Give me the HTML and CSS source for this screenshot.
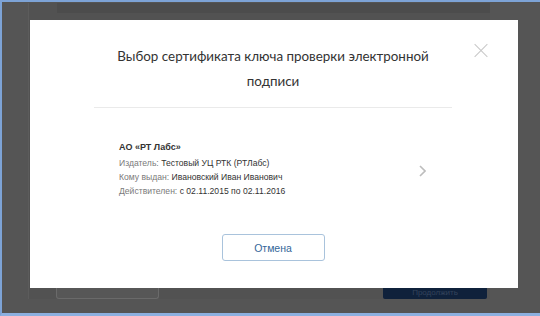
FILE: index.html
```html
<!DOCTYPE html>
<html lang="ru">
<head>
    <meta charset="UTF-8">
    <title>Выбор сертификата</title>
    <link rel="stylesheet" href="styles.css">
</head>
<body>
    <div class="screen">
        <!-- page behind the overlay -->
        <div class="page">
            <div class="page-header"></div>
            <div class="page-spacer"></div>
            <div class="page-actions">
                <div class="btn-back"></div>
                <div class="btn-next">Продолжить</div>
            </div>
        </div>

        <!-- modal dialog -->
        <div class="modal">
            <span class="modal-close"></span>
            <h2 class="modal-title">Выбор сертификата ключа проверки электронной подписи</h2>
            <div class="modal-divider"></div>

            <div class="cert">
                <div class="cert-info">
                    <div class="cert-name">АО «РТ Лабс»</div>
                    <div class="cert-row"><span class="cert-label">Издатель:</span> Тестовый УЦ РТК (РТЛабс)</div>
                    <div class="cert-row"><span class="cert-label">Кому выдан:</span> Ивановский Иван Иванович</div>
                    <div class="cert-row"><span class="cert-label">Действителен:</span> с 02.11.2015 по 02.11.2016</div>
                </div>
                <svg class="cert-arrow" width="7" height="12" viewBox="0 0 7 12">
                    <polyline points="1,1 6,6 1,11" fill="none" stroke="#bdbdbd" stroke-width="1.6"/>
                </svg>
            </div>

            <div class="modal-footer">
                <button class="btn-cancel">Отмена</button>
            </div>
        </div>
    </div>
</body>
</html>
```

FILE: styles.css
```css
/* Basic reset */
* {
    margin: 0;
    padding: 0;
    box-sizing: border-box;
}

body {
    width: 540px;
    height: 316px;
    overflow: hidden;
    font-family: 'Liberation Sans', Arial, sans-serif;
}

/* Outer frame with blue edge */
.screen {
    position: relative;
    width: 540px;
    height: 316px;
    background-color: #555;
    border-top: 2px solid #7da3d6;
    border-left: 2px solid #7da3d6;
    border-bottom: 3px solid #8cb0e0;
    padding: 1px 50px 14px 26px;
}

/* Dimmed page under the overlay */
.page {
    height: 100%;
    display: flex;
    flex-direction: column;
    background-color: #525252;
    border-left: 1px solid #5c5c5c;
}

.page-header {
    height: 10px;
    margin: 0 0 0 28px;
    background-color: #4c4c4c;
}

.page-spacer {
    flex: 1;
}

.page-actions {
    display: flex;
    justify-content: space-between;
    padding: 0 0 0 27px;
}

.btn-back {
    width: 103px;
    height: 11px;
    border: 1px solid #6a6a6a;
    border-top: none;
    border-radius: 0 0 3px 3px;
    background-color: #575757;
}

.btn-next {
    width: 104px;
    height: 11px;
    border-radius: 0 0 2px 2px;
    background-color: #0f213b;
    color: #34445c;
    font-size: 8px;
    line-height: 10px;
    text-align: center;
    margin-right: 3px;
}

/* Modal */
.modal {
    position: absolute;
    left: 28px;
    top: 18px;
    width: 488px;
    height: 268px;
    background-color: #fff;
    padding: 24px 66px 0 64px;
}

.modal-close {
    position: absolute;
    top: 24px;
    right: 30px;
    width: 14px;
    height: 14px;
}

.modal-close::before,
.modal-close::after {
    content: '';
    position: absolute;
    left: -2px;
    top: 6px;
    width: 18px;
    height: 1px;
    background-color: #c8c8c8;
    transform: rotate(45deg);
}

.modal-close::after {
    transform: rotate(-45deg);
}

.modal-title {
    font-family: Lato, sans-serif;
    font-weight: normal;
    font-size: 13.4px;
    line-height: 25px;
    color: #333;
    text-align: center;
}

.modal-divider {
    height: 1px;
    margin-top: 13px;
    background-color: #eaeaea;
}

/* Certificate row */
.cert {
    display: flex;
    align-items: center;
    padding: 32px 26px 0 25px;
}

.cert-info {
    flex: 1;
    font-size: 8.6px;
    line-height: 14px;
    color: #333;
}

.cert-name {
    font-weight: bold;
    font-size: 9px;
    margin-bottom: 2px;
}

.cert-label {
    color: #7a7a7a;
}

.cert-arrow {
    display: block;
    margin-top: 4px;
}

/* Footer with cancel button */
.modal-footer {
    display: flex;
    justify-content: center;
    padding-top: 36px;
}

.btn-cancel {
    width: 103px;
    height: 27px;
    border: 1px solid #a9c3dc;
    border-radius: 3px;
    background-color: #fff;
    color: #35679a;
    font-family: 'Liberation Sans', Arial, sans-serif;
    font-size: 10.5px;
}
```
